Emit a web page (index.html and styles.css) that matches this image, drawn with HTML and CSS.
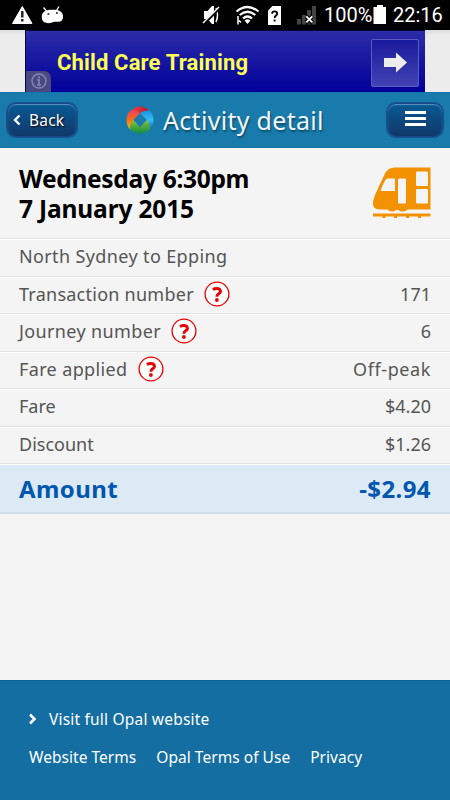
FILE: index.html
```html
<!DOCTYPE html>
<html lang="en">
<head>
    <meta charset="UTF-8">
    <meta name="viewport" content="width=device-width, initial-scale=1.0">
    <title>Activity detail</title>
    <link rel="stylesheet" href="styles.css">
</head>
<body>
    <div class="main">
        <div class="status">
            <svg class="status-left" width="70" height="30" viewBox="0 0 70 30">
                <path d="M22.3 6.500L32 23.500H12.500Z" fill="#fff" stroke="#fff" stroke-linejoin="round"/>
                <path d="M22.300 11v6.500M22.300 19v2.500" stroke="#222" stroke-width="2.400"/>
                <path d="M43.500 7.500l3.500 4M59 6.500l-2.500 4" stroke="#fff" stroke-width="1.300"/>
                <path d="M41.800 17C41.800 11.500 46 9.800 52.500 9.800S63 11.500 63 16.500C63 20.500 61 22 57.500 21.800 55 21.600 54 21.500 52 22.500 48 24 41.800 23.500 41.800 17Z" fill="#fff"/>
                <path d="M47.500 14h1.800M56 13h1.800" stroke="#111" stroke-width="1.600"/>
            </svg>
            <svg class="status-right" width="126" height="30" viewBox="200 0 126 30">
                <path d="M204 11h3.500l4.500-5h2v18h-2l-4.500-5H204Z" fill="#fff"/>
                <path d="M216 8q3 7 0 14" fill="none" stroke="#fff" stroke-width="1.500"/>
                <path d="M204 23.500L220.500 7" stroke="#000" stroke-width="3"/>
                <path d="M203 23L219 7" stroke="#fff" stroke-width="1.500"/>
                <g fill="none" stroke="#fff" stroke-width="2.200">
                    <path d="M236.500 11.500q11-9 22 0M239.700 15q7.800-6.500 15.600 0M243 18.500q4.500-4 9 0"/>
                    <path d="M238 16v8.500M239 20.500l2 2" stroke-width="1.500"/>
                </g>
                <path d="M244.500 20.500q3-2.500 6 0l-3 3.500Z" fill="#fff"/>
                <path d="M272.500 6H281v19h-13V10.500Z" fill="#fff"/>
                <path d="M272 13.700q.2-2.300 2.600-2.300t2.600 2.200q0 1.400-1.500 2.300-1 .6-1 2M274.600 19.500v2" fill="none" stroke="#000" stroke-width="1.900"/>
                <path d="M297 19h4v5.500h-4ZM302 15h4v9.500h-4ZM307 10h4v14.500h-4ZM312 6h4v18.500h-4Z" fill="#444"/>
                <path d="M306.300 16.500l6 6M312.300 16.500l-6 6" stroke="#000" stroke-width="4"/>
                <path d="M306.300 16.300l6 6M312.300 16.300l-6 6" stroke="#fff" stroke-width="1.800"/>
            </svg>
            <div class="percent">100%</div>
            <svg class="battery" width="14" height="20" viewBox="0 0 14 20">
                <path d="M4 0h6v2h3v17H.5V2H4Z" fill="#fff"/>
            </svg>
            <div class="clock">22:16</div>
        </div>

        <div class="ad-bar">
            <div class="ad">
                <div class="ad-text">Child Care Training</div>
                <div class="ad-go">
                    <svg width="24" height="22" viewBox="0 0 24 22">
                        <path d="M0 6h12V.5L23 10.500 12 20.500V15H0Z" fill="#eee"/>
                    </svg>
                </div>
                <div class="ad-info">
                    <svg width="18" height="18" viewBox="0 0 18 18" fill="none" stroke="#8886b4">
                        <circle cx="9" cy="9" r="7" stroke-width="1.400"/>
                        <path d="M9 4.300v2M7.300 7.800H9v5M7 13h4" stroke-width="1.700"/>
                    </svg>
                </div>
            </div>
        </div>

        <div class="header">
            <div class="btn back">
                <svg width="8" height="12" viewBox="0 0 8 12">
                    <path d="M6.500 1.500L2 6l4.500 4.500" fill="none" stroke="#fff" stroke-width="2.400"/>
                </svg>
                <span>Back</span>
            </div>
            <div class="title">
                <svg width="28" height="28" viewBox="0 0 28 28">
                    <defs>
                        <linearGradient id="left" x1="0" y1="0" x2="0" y2="1">
                            <stop offset="0" stop-color="#f0435c"/>
                            <stop offset=".4" stop-color="#f4651f"/>
                            <stop offset="1" stop-color="#fdb813"/>
                        </linearGradient>
                        <linearGradient id="top" x1="0" y1="0" x2="1" y2="0">
                            <stop offset="0" stop-color="#f0404a"/>
                            <stop offset="1" stop-color="#b81a2b"/>
                        </linearGradient>
                        <linearGradient id="right" x1="0" y1="0" x2="0" y2="1">
                            <stop offset="0" stop-color="#1a8fe0"/>
                            <stop offset=".5" stop-color="#35bdf2"/>
                            <stop offset="1" stop-color="#1567b4"/>
                        </linearGradient>
                        <linearGradient id="bottom" x1="0" y1="0" x2="0" y2="1">
                            <stop offset="0" stop-color="#8ac53e"/>
                            <stop offset="1" stop-color="#0f8a43"/>
                        </linearGradient>
                    </defs>
                    <path d="M5 4.500Q9 .5 14 .5T23 4.500L20 12 14 7Z" fill="url(#top)"/>
                    <path d="M23.500 4.500Q27.500 8.500 27.500 14T24 23.500L17 18 21 14 14 7Q18 4 23.500 4.500Z" fill="url(#right)"/>
                    <path d="M4 23.500Q.5 19.500 .5 14T4.500 4.500Q10 3.500 14 7L7 14 11 18Z" fill="url(#left)"/>
                    <path d="M24 23.500Q19.500 27.500 14 27.500T4 23.500Q3.500 18 7 14L14 21 21 14Q24.500 18 24 23.500Z" fill="url(#bottom)"/>
                </svg>
                <span>Activity detail</span>
            </div>
            <div class="btn menu">
                <div></div>
                <div></div>
                <div></div>
            </div>
        </div>

        <div class="top">
            <div class="date">
                <div class="day">Wednesday 6:30pm</div>
                <div class="month">7 January 2015</div>
            </div>
            <svg class="train" width="58" height="52" viewBox="0 0 58 52">
                <path d="M57.500.5V42.500H34.500Q33 44.500 30 44.500T25.500 43H23Q21.500 44.500 19 44.500T14.500 42.500H6Q0 42 0 36.500C0 30 6 20 11 8.500Q14 .5 22 .5Z" fill="#f39200"/>
                <g fill="#f4f4f4">
                    <path d="M14.500 11.500H22V24H7.500Q8.500 20.500 11.500 14.500 13 11.500 14.500 11.500Z"/>
                    <rect x="25" y="11.500" width="8" height="25" rx="1"/>
                    <rect x="43" y="4.500" width="12" height="14.500" rx="1"/>
                    <rect x="43" y="22" width="12" height="14.500" rx="1"/>
                </g>
                <path d="M0 46.500H57.500V49.500H48V51H45V49.500H36V51H33V49.500H24V51H21V49.500H12.500V51H9.500V49.500H0Z" fill="#f39200"/>
            </svg>
        </div>

        <div class="rows">
            <div class="row"><span class="wide">North Sydney to Epping</span></div>
            <div class="row">
                <span class="transaction">Transaction number</span>
                <div class="help"><svg width="26" height="26" viewBox="0 0 26 26"><use href="#help"/></svg></div>
                <span class="value">171</span>
            </div>
            <div class="row">
                <span class="wide">Journey number</span>
                <div class="help"><svg width="26" height="26" viewBox="0 0 26 26"><use href="#help"/></svg></div>
                <span class="value">6</span>
            </div>
            <div class="row">
                <span class="wide">Fare applied</span>
                <div class="help"><svg width="26" height="26" viewBox="0 0 26 26"><use href="#help"/></svg></div>
                <span class="value peak">Off-peak</span>
            </div>
            <div class="row"><span>Fare</span><span class="value">$4.20</span></div>
            <div class="row"><span>Discount</span><span class="value">$1.26</span></div>
            <div class="row amount"><span>Amount</span><span class="value">-$2.94</span></div>
        </div>

        <div class="footer">
            <div class="visit">
                <svg width="9" height="12" viewBox="0 0 9 12">
                    <path d="M1 1.500L5.500 6 1 10.500" fill="none" stroke="#fff" stroke-width="2.500"/>
                </svg>
                <span>Visit full Opal website</span>
            </div>
            <div class="links">
                <span>Website Terms</span>
                <span>Opal Terms of Use</span>
                <span>Privacy</span>
            </div>
        </div>
    </div>

    <svg width="0" height="0" class="defs">
        <symbol id="help" viewBox="0 0 26 26">
            <circle cx="13" cy="13" r="11.900" fill="#fff" stroke="#e90000" stroke-width="1.300"/>
            <path d="M8.900 8.600Q10.700 7.500 12.700 7.500C17 7.500 17.400 11.200 14.700 12.700Q12.900 13.700 12.900 15.800" fill="none" stroke="#e90000" stroke-width="2.900"/>
            <circle cx="12.900" cy="19" r="1.900" fill="#e90000"/>
        </symbol>
    </svg>
</body>
</html>
```
FILE: styles.css
```css
* {
    margin: 0;
    padding: 0;
    box-sizing: border-box;
}
svg {
    display: block;
    flex: none;
}
.defs {
    position: absolute;
}
.main {
    width: 450px;
    height: 800px;
    overflow: hidden;
    display: flex;
    flex-direction: column;
    background-color: #f4f4f4;
    font-family: "Noto Sans", "Open Sans", sans-serif;
    white-space: nowrap;
}

.status {
    height: 30px;
    flex: none;
    display: flex;
    align-items: center;
    background-color: #000;
    color: #fff;
    font-family: Roboto, sans-serif;
    font-size: 20px;
}
.status-right {
    margin-left: 130px;
}
.percent {
    width: 47px;
    margin-left: -2px;
}
.battery {
    margin-left: 2px;
}
.clock {
    margin-left: 6px;
}

.ad-bar {
    height: 63px;
    flex: none;
    padding: 0 25px;
    background: linear-gradient(#dcdcdc, #ececec 5px);
    border-bottom: 1px solid #1673ad;
}
.ad {
    position: relative;
    height: 62px;
    padding: 2px 6px 0 31px;
    display: flex;
    align-items: center;
    justify-content: space-between;
    background: linear-gradient(#2c2ca8, #00009a);
    border-top: 1px solid #05053c;
    border-left: 1px solid #05053c;
}
.ad-text {
    font-family: Roboto, sans-serif;
    font-size: 22px;
    font-weight: 700;
    letter-spacing: 0.15px;
    color: #ffff52;
}
.ad-go {
    width: 48px;
    height: 48px;
    padding-left: 1px;
    display: flex;
    align-items: center;
    justify-content: center;
    background: linear-gradient(#1a1a9c, #4343b4);
    border: 1px solid #5c5cc0;
    border-radius: 2px;
}
.ad-info {
    position: absolute;
    left: 0;
    bottom: 0;
    width: 25px;
    height: 21px;
    padding: 1px 0 0 4px;
    background-color: #4a4882;
    border-top-right-radius: 7px;
}

.header {
    height: 55px;
    flex: none;
    padding: 0 7px;
    display: flex;
    align-items: center;
    background-color: #187bac;
    border-bottom: 1px solid #1874a4;
}
.btn {
    height: 34px;
    display: flex;
    border: 1px solid #164a85;
    border-radius: 9px;
    background: linear-gradient(#075a94, #12386a);
    box-shadow: inset 0 1px 1px #5c94c0, 0 0 0 1px #17508c;
}
.back {
    width: 70px;
    padding: 0 0 1px 5px;
    align-items: center;
    gap: 8px;
    color: #fff;
    font-size: 15.500px;
    letter-spacing: 0.2px;
    text-shadow: 1px 1px 2px #000;
}
.title {
    margin-left: 49px;
    padding-bottom: 1px;
    display: flex;
    align-items: center;
    gap: 9px;
    color: #f0f5f8;
    font-size: 25px;
    letter-spacing: 0.300px;
    text-shadow: 1px 2px 2px rgba(0, 0, 0, 0.4);
}
.menu {
    width: 56px;
    margin-left: auto;
    padding-top: 7px;
    flex-direction: column;
    align-items: center;
    gap: 3px;
}
.menu div {
    width: 21px;
    height: 3px;
    background-color: #fff;
}

.top {
    height: 91px;
    flex: none;
    padding: 16px 19px 0;
    display: flex;
    justify-content: space-between;
    border-bottom: 1px solid #e2e2e2;
}
.date {
    color: #000;
    font-size: 24.500px;
    font-weight: 700;
    line-height: 30px;
}
.day {
    letter-spacing: -0.300px;
}
.month {
    letter-spacing: -0.150px;
}
.train {
    margin-top: 3px;
}
.row {
    height: 37.500px;
    padding: 0 19px 3px;
    display: flex;
    align-items: center;
    border-top: 1px solid #fff;
    border-bottom: 1px solid #e2e2e2;
    color: #555;
    font-size: 18px;
}
.wide {
    letter-spacing: 0.370px;
}
.transaction {
    letter-spacing: 0.250px;
}
.help {
    margin-left: 10px;
}
.value {
    margin-left: auto;
}
.peak {
    letter-spacing: 0.600px;
}
.amount {
    height: 50px;
    padding-bottom: 1px;
    background-color: #dceaf5;
    border-bottom: 2px solid #cfdde8;
    color: #0057ad;
    font-size: 24px;
    font-weight: 700;
    letter-spacing: 0.400px;
}

.footer {
    height: 120px;
    flex: none;
    margin-top: auto;
    padding: 27px 29px 0;
    background-color: #146ea1;
    border-top: 1px solid #0c639a;
    color: #fff;
    font-size: 15.500px;
    line-height: 22px;
}
.visit {
    display: flex;
    align-items: center;
    gap: 11px;
    letter-spacing: 0.200px;
}
.links {
    margin-top: 16px;
    display: flex;
    gap: 20px;
    letter-spacing: 0.040px;
}
```
